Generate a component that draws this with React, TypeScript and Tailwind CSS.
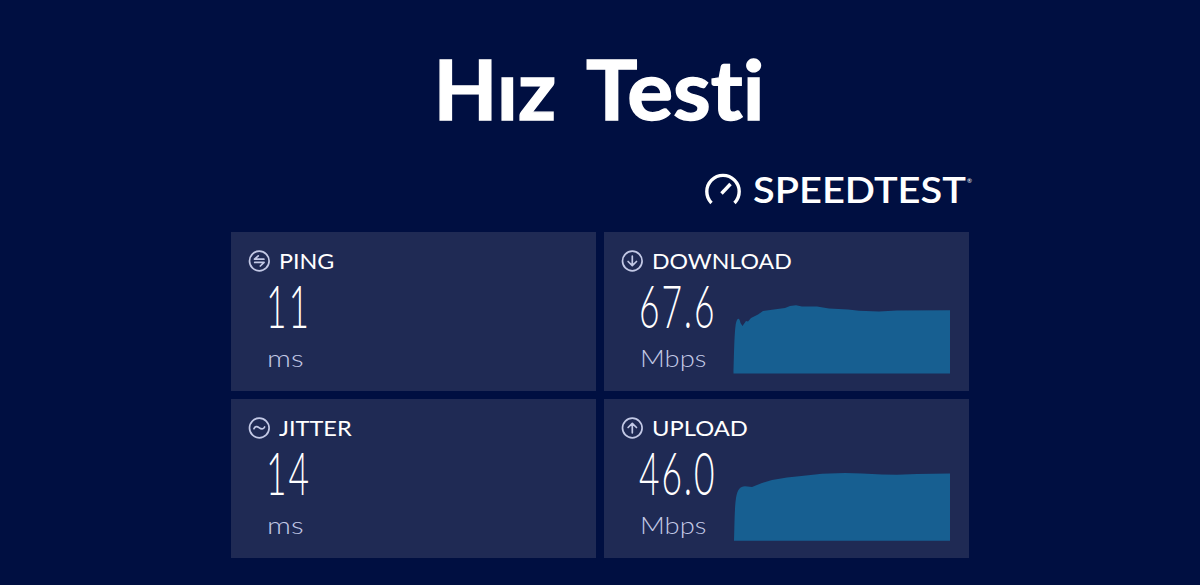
import type { ReactNode } from "react";

function StatIcon({ children }: { children: ReactNode }) {
  return (
    <svg viewBox="0 0 24 24" className="size-6 shrink-0" fill="none" stroke="#c3c9e6" strokeWidth="1.7" strokeLinecap="round" strokeLinejoin="round">
      <circle cx="12.3" cy="12" r="9.8" />
      {children}
    </svg>
  );
}

const icons = {
  ping: <path d="M11.300 6.800 7.500 10.200H16.900M7.700 13.400H17.100L13.300 17" />,
  jitter: <path d="M7 12.600C8 10.300 9.900 9.900 12 11.600S16.500 13.700 17.600 11" />,
  download: <path d="M12.300 7.200V16.500M8.100 12.500 12.300 16.600 16.500 12.500" />,
  upload: <path d="M12.300 16.800V7.500M8.100 11.500 12.300 7.400 16.500 11.500" />,
};

type StatProps = { icon: keyof typeof icons; label: ReactNode; value: string; unit: ReactNode; chart?: string };

function Stat({ icon, label, value, unit, chart }: StatProps) {
  return (
    <section className="flex h-[159px] items-end justify-between bg-[#1f2a54] pr-[19px] pb-[18px] pl-4">
      <div className="h-[124px] w-[98px] whitespace-nowrap">
        <div className="flex h-6 items-center gap-2 text-[22px] leading-6 text-white">
          <StatIcon>{icons[icon]}</StatIcon>
          {label}
        </div>
        <div className="mt-[7px] ml-[19px] flex h-[50px] items-center text-[60px] leading-[50px] font-light text-white">
          <span className="w-full origin-left scale-x-[0.59] tracking-[3.2px]">{value}</span>
        </div>
        <div className="mt-[13px] ml-[19.5px] flex h-[30px] items-center text-[24px] leading-[30px] font-light text-[#c3c9e6]">{unit}</div>
      </div>
      {chart && (
        <svg viewBox="0 0 217 70" className="h-[70px] w-[217px] shrink-0 overflow-visible" fill="#175f91">
          <path d={chart} />
        </svg>
      )}
    </section>
  );
}

const downloadChart =
  "M.5 70.500C1 52 1.500 26 3 20C4.500 14 6.500 15 7.500 20L9.500 23L13 18L15 18.500L18 15L25 11.500L30 8L39 6.800L52 5L57 3L63 2.300L69 3.500H84L96 5.500L115 6.500L126 7.800L146 8.500L164 7.500L217 7.200V70.500Z";
const uploadChart =
  "M1 70.700C1.500 55 1.500 38 3 28C4.500 19 7 16.500 12 16.200L19 17L29 13L39 10L54 7.500L73 5.500L89 3.800L112 3L129 3.500L149 4.500L164 4.700L184 4L217 3.500V70.700Z";

export default function App() {
  return (
    <main className="flex h-[585px] w-[1200px] flex-col items-center overflow-hidden bg-[#000f41] font-['Lato',sans-serif]">
      <h1 className="mt-[38px] mb-[2px] flex h-[100px] w-[334px] text-[83px] leading-[100px] font-bold text-white [font-variant-ligatures:none] [-webkit-text-stroke:1.4px_white]">
        <span className="ml-[0.5px] w-[152px] origin-left">Hız</span>
        <span className="origin-left scale-x-[1.035]">Testi</span>
      </h1>
      <div className="mt-[30px] flex h-10 w-[744px] items-center justify-end text-white">
        <svg viewBox="0 0 38 36" className="mr-[11px] mb-0.5 h-9 w-[38px]" fill="none" stroke="currentColor">
          <path d="M7.500 32A16.200 16.200 0 1 1 30.500 32" strokeWidth="3.400" />
          <path d="M17.500 22.500 26.500 13" strokeWidth="3.400" />
        </svg>
        <span className="mb-0.5 w-[213px] origin-left scale-x-[1.075] text-[37px] leading-10 font-semibold whitespace-nowrap">SPEEDTEST</span>
        <span className="mb-5 ml-px text-[6px]">®</span>
      </div>
      <div className="mt-[22px] grid w-[738px] grid-cols-2 gap-2">
        <Stat icon="ping" label={<span className="origin-left scale-x-[1.06]">PING</span>} value="11" unit={<span className="origin-left scale-x-[1.24]">ms</span>} />
        <Stat icon="download" label={<span className="origin-left scale-x-[1.05]">DOWNLOAD</span>} value="67.6" unit={<span className="origin-left scale-x-[1.14]">Mbps</span>} chart={downloadChart} />
        <Stat icon="jitter" label={<span className="origin-left scale-x-[1.07]">JITTER</span>} value="14" unit={<span className="origin-left scale-x-[1.24]">ms</span>} />
        <Stat icon="upload" label={<span className="origin-left scale-x-[1.08]">UPLOAD</span>} value="46.0" unit={<span className="origin-left scale-x-[1.14]">Mbps</span>} chart={uploadChart} />
      </div>
    </main>
  );
}
